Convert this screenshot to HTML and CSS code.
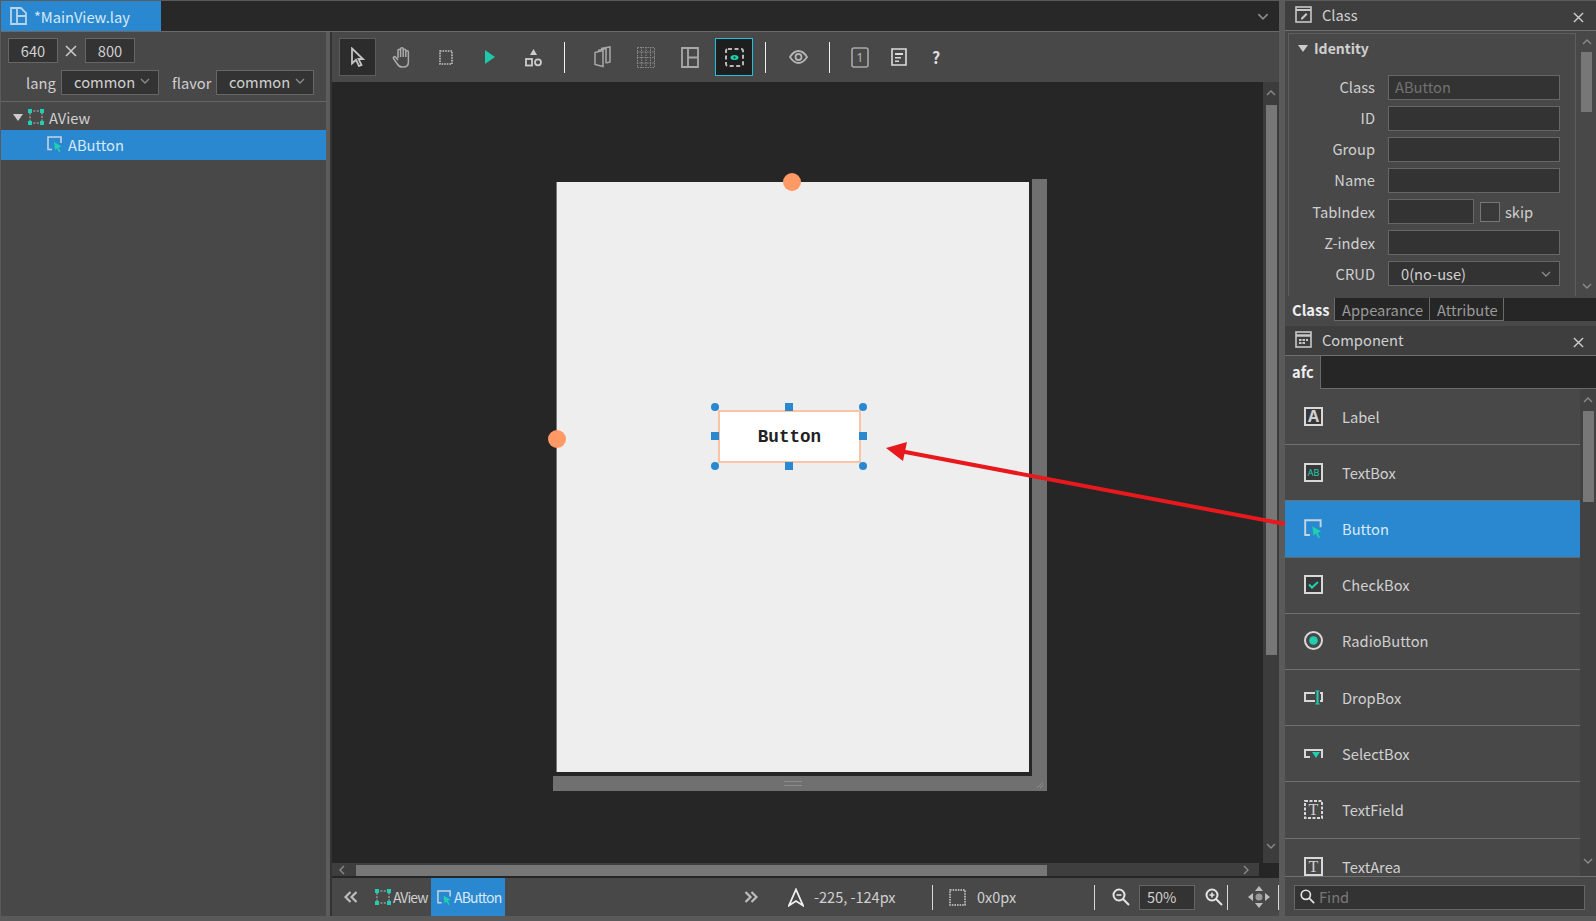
FILE: index.html
```html
<!DOCTYPE html>
<html lang="en">
<head>
    <meta charset="utf-8">
    <title>MainView.lay</title>
    <link rel="stylesheet" href="styles.css">
</head>
<body>
    <svg class="defs" width="0" height="0">
        <symbol id="i-view" viewBox="0 0 16 16">
            <rect x="2" y="2" width="12" height="12" fill="none" stroke="#bbb" stroke-dasharray="2 1.4"/>
            <path d="M0 0h4v4H0zM12 0h4v4h-4zM0 12h4v4H0zM12 12h4v4h-4z" fill="#1fd0b0"/>
        </symbol>
        <symbol id="i-button" viewBox="0 0 16 16">
            <path d="M5 13.500H1V1h13v6" fill="none" stroke="#c4d4e2" stroke-width="1.600"/>
            <path d="M7 6l7.500 4.500-3 1 2 4-1.500.5-2-3.800-2 1.800z" fill="#1fd0b0"/>
        </symbol>
        <symbol id="i-chev" viewBox="0 0 10 6">
            <path d="M1 1l4 4 4-4" fill="none" stroke="#8a8a8a" stroke-width="1.400"/>
        </symbol>
        <symbol id="i-close" viewBox="0 0 12 12">
            <path d="M1 1l10 10M11 1L1 11" stroke="#ccc" stroke-width="1.500"/>
        </symbol>
        <symbol id="i-glass" viewBox="0 0 18 18">
            <circle cx="7" cy="7" r="5.500" fill="none" stroke="#e4e4e4" stroke-width="2"/>
            <path d="M11 11l6 6" stroke="#e4e4e4" stroke-width="2"/>
        </symbol>
    </svg>

    <div class="app">
        <div class="main">
            <div class="tabbar">
                <div class="file-tab">
                    <svg width="17" height="18" viewBox="0 0 17 18"><path d="M1 1h10l5 5v11H1zM7 1v16M7 9h9" fill="none" stroke="#b8d4ea" stroke-width="1.800"/></svg>
                    <span>*MainView.lay</span>
                </div>
                <svg class="tab-more" width="12" height="7"><use href="#i-chev"/></svg>
            </div>

            <div class="work">
                <div class="left">
                    <div class="size-row">
                        <div class="field size-field">640</div>
                        <svg class="times" width="12" height="12"><use href="#i-close"/></svg>
                        <div class="field size-field">800</div>
                    </div>
                    <div class="lang-row">
                        <span class="lang-label">lang</span>
                        <div class="field select-field"><span>common</span><svg width="10" height="6"><use href="#i-chev"/></svg></div>
                        <span class="flavor-label">flavor</span>
                        <div class="field select-field"><span>common</span><svg width="10" height="6"><use href="#i-chev"/></svg></div>
                    </div>
                    <div class="tree">
                        <div class="tree-row">
                            <i class="tri"></i>
                            <svg width="16" height="16"><use href="#i-view"/></svg>
                            <span>AView</span>
                        </div>
                        <div class="tree-row child selected">
                            <svg width="16" height="16"><use href="#i-button"/></svg>
                            <span>AButton</span>
                        </div>
                    </div>
                </div>
                <div class="splitter"></div>

                <div class="center">
                    <div class="toolbar">
                        <div class="tool pressed">
                            <svg width="16" height="20" viewBox="0 0 16 20"><path d="M2 1.500l11 10.500h-4.500l3 6-2.500 1-3-6.200L2 16.500z" fill="none" stroke="#c4c4c4" stroke-width="1.800"/></svg>
                        </div>
                        <div class="tool">
                            <svg width="20" height="22" viewBox="0 0 20 22"><path d="M6 12V4.500a1.300 1.300 0 0 1 2.600 0V3a1.300 1.300 0 0 1 2.600 0v1.500a1.300 1.300 0 0 1 2.600 0v1.500a1.300 1.300 0 0 1 2.600 0v10c0 3-2 5-5 5H10c-2.500 0-3.500-1-5-3.500L1.500 12.500c-.8-1.500 1.200-2.500 2.200-1.300L6 14M8.600 4.500V11M11.200 4.500V11M13.800 6v5" fill="none" stroke="#aaa" stroke-width="1.500"/></svg>
                        </div>
                        <div class="tool">
                            <svg width="14" height="15" viewBox="0 0 14 15"><rect x="1" y="1" width="12" height="13" fill="none" stroke="#c4c4c4" stroke-width="1.600" stroke-dasharray="1.600 1"/></svg>
                        </div>
                        <div class="tool">
                            <svg width="10" height="14" viewBox="0 0 10 14"><path d="M0 0l10 7-10 7z" fill="#1fc8a8"/></svg>
                        </div>
                        <div class="tool">
                            <svg width="17" height="19" viewBox="0 0 17 19"><path d="M8.500 1l3.500 6H5z" fill="#ccc"/><rect x="1" y="11" width="6" height="6.500" fill="none" stroke="#ccc" stroke-width="1.800"/><circle cx="13" cy="14.300" r="3" fill="none" stroke="#ccc" stroke-width="1.800"/></svg>
                        </div>
                        <i class="tool-sep first"></i>
                        <div class="tool">
                            <svg width="17" height="22" viewBox="0 0 17 22"><path d="M1 6.500l8-2v16l-8-2z" fill="none" stroke="#a8a8a8" stroke-width="1.500"/><path d="M4 4.500l8-2v15M7 2.500l9-1.500v15l-3 .8" fill="none" stroke="#a8a8a8" stroke-width="1.500"/></svg>
                        </div>
                        <div class="tool">
                            <svg width="18" height="21" viewBox="0 0 18 21"><rect x=".5" y=".5" width="17" height="20" fill="none" stroke="#8a8a8a" stroke-dasharray="1.500 1"/><path d="M0 5h18M0 10.500h18M0 16h18M4.500 0v21M9 0v21M13.500 0v21" stroke="#8a8a8a" stroke-dasharray="1.500 1"/></svg>
                        </div>
                        <div class="tool">
                            <svg width="18" height="21" viewBox="0 0 18 21"><path d="M1 1h16v19H1zM7 1v19M7 10.500h10" fill="none" stroke="#a8a8a8" stroke-width="1.800"/></svg>
                        </div>
                        <div class="tool focus">
                            <svg width="19" height="19" viewBox="0 0 19 19"><rect x="1" y="1" width="17" height="17" rx="2" fill="none" stroke="#b8b8b8" stroke-width="2" stroke-dasharray="4 2.500"/><ellipse cx="9.500" cy="9.500" rx="4" ry="2.500" fill="#1fd0b0"/><circle cx="9.500" cy="9.500" r="1" fill="#222"/></svg>
                        </div>
                        <i class="tool-sep second"></i>
                        <div class="tool">
                            <svg width="19" height="14" viewBox="0 0 19 14"><path d="M1 7c2.500-4 5-6 8.500-6S15.500 3 18 7c-2.500 4-5 6-8.500 6S3.500 11 1 7z" fill="none" stroke="#b4b4b4" stroke-width="1.800"/><circle cx="9.500" cy="7" r="3" fill="none" stroke="#b4b4b4" stroke-width="1.800"/></svg>
                        </div>
                        <i class="tool-sep third"></i>
                        <div class="tool w40">
                            <svg width="18" height="21" viewBox="0 0 18 21"><rect x="1" y="1" width="16" height="19" rx="2" fill="none" stroke="#a8a8a8" stroke-width="1.600"/><text x="9" y="15" text-anchor="middle" class="glyph" font-size="12" fill="#b8b8b8">1</text></svg>
                        </div>
                        <div class="tool w38">
                            <svg width="16" height="18" viewBox="0 0 16 18"><path d="M1 1h14v16H1z" fill="none" stroke="#dcdcdc" stroke-width="1.600"/><path d="M4 5h8v2H4zM4 9h6v1.500H4zM4 12.500h4V14H4z" fill="#dcdcdc"/></svg>
                        </div>
                        <div class="tool w36 help">?</div>
                    </div>

                    <div class="canvas-wrap">
                        <div class="canvas">
                            <div class="right-grip"></div>
                            <div class="bottom-grip">
                                <i class="grip-lines"></i>
                                <svg class="grip-corner" width="8" height="8" viewBox="0 0 8 8"><path d="M1 7l6-6M4 7l3-3" stroke="#8c8c8c"/></svg>
                            </div>
                            <div class="paper"></div>
                            <div class="anchor anchor-top"></div>
                            <div class="anchor anchor-left"></div>
                            <div class="widget">Button</div>
                            <i class="hd round tl"></i><i class="hd tc"></i><i class="hd round tr"></i>
                            <i class="hd ml"></i><i class="hd mr"></i>
                            <i class="hd round bl"></i><i class="hd bc"></i><i class="hd round br"></i>
                        </div>
                        <div class="vscroll">
                            <svg width="10" height="6" class="flip"><use href="#i-chev"/></svg>
                            <div class="vthumb"></div>
                            <svg width="10" height="6"><use href="#i-chev"/></svg>
                        </div>
                    </div>

                    <div class="hscroll">
                        <div class="htrack">
                            <svg class="rot-l" width="10" height="6"><use href="#i-chev"/></svg>
                            <div class="hthumb"></div>
                            <svg class="rot-r" width="10" height="6"><use href="#i-chev"/></svg>
                        </div>
                    </div>

                    <div class="statusbar">
                        <svg class="dbl" width="14" height="12" viewBox="0 0 14 12"><path d="M6.500 1L1.500 6l5 5M12.500 1l-5 5 5 5" fill="none" stroke="#bdbdbd" stroke-width="2.200"/></svg>
                        <div class="crumb">
                            <svg width="16" height="16"><use href="#i-view"/></svg>
                            <span>AView</span>
                        </div>
                        <div class="crumb active">
                            <svg width="15" height="15"><use href="#i-button"/></svg>
                            <span>AButton</span>
                        </div>
                        <svg class="dbl-right" width="14" height="12" viewBox="0 0 14 12"><path d="M1.500 1l5 5-5 5M7.500 1l5 5-5 5" fill="none" stroke="#bdbdbd" stroke-width="2.200"/></svg>
                        <svg class="pos-icon" width="16" height="19" viewBox="0 0 16 19"><path d="M8 1.500L15 17.500 8 13 1 17.500z" fill="none" stroke="#f0f0f0" stroke-width="1.800"/></svg>
                        <span class="pos-text">-225, -124px</span>
                        <i class="bar-sep s1"></i>
                        <svg class="size-icon" width="17" height="17" viewBox="0 0 17 17"><rect x="1" y="1" width="15" height="15" fill="none" stroke="#d0d0d0" stroke-width="1.500" stroke-dasharray="1.600 1"/></svg>
                        <span class="size-text">0x0px</span>
                        <i class="bar-sep s2"></i>
                        <svg class="zoom-out" width="18" height="18" viewBox="0 0 18 18"><use href="#i-glass"/><path d="M4.500 7h5" stroke="#e4e4e4" stroke-width="1.600"/></svg>
                        <div class="field zoom-field">50%</div>
                        <svg class="zoom-in" width="18" height="18" viewBox="0 0 18 18"><use href="#i-glass"/><path d="M4.500 7h5M7 4.500v5" stroke="#e4e4e4" stroke-width="1.600"/></svg>
                        <i class="bar-sep s3"></i>
                        <svg class="move-icon" width="24" height="24" viewBox="0 0 24 24"><path d="M12 1l4 5h-8zM12 23l-4-5h8zM1 12l5-4v8zM23 12l-5 4V8z" fill="#bdbdbd"/><circle cx="12" cy="12" r="3.500" fill="#9a9a9a"/></svg>
                        <i class="bar-sep s4"></i>
                    </div>
                </div>
            </div>
        </div>

        <div class="right">
            <div class="panel-head">
                <svg width="17" height="17" viewBox="0 0 17 17"><rect x="1" y="1" width="15" height="15" fill="none" stroke="#c8c8c8" stroke-width="1.600"/><path d="M1 4h15" stroke="#c8c8c8" stroke-width="2"/><path d="M6 12l5-5 1.500 1.500-5 5H6z" fill="#c8c8c8"/></svg>
                <span>Class</span>
                <svg class="close" width="11" height="11"><use href="#i-close"/></svg>
            </div>
            <div class="class-box">
                <div class="class-inner">
                    <div class="group-title"><i class="tri"></i><span>Identity</span></div>
                    <div class="form">
                        <label>Class</label><div class="field wide muted">AButton</div>
                        <label>ID</label><div class="field wide"></div>
                        <label>Group</label><div class="field wide"></div>
                        <label>Name</label><div class="field wide"></div>
                        <label>TabIndex</label>
                        <div class="tab-line">
                            <div class="field tabindex"></div>
                            <i class="check"></i>
                            <span>skip</span>
                        </div>
                        <label>Z-index</label><div class="field wide"></div>
                        <label>CRUD</label>
                        <div class="field wide crud"><span>0(no-use)</span><svg width="10" height="6"><use href="#i-chev"/></svg></div>
                    </div>
                </div>
                <div class="rscroll">
                    <svg width="10" height="6" class="flip"><use href="#i-chev"/></svg>
                    <div class="rthumb"></div>
                    <svg width="10" height="6"><use href="#i-chev"/></svg>
                </div>
            </div>
            <div class="tabs">
                <div class="tab active">Class</div>
                <div class="tab appearance">Appearance</div>
                <div class="tab attribute">Attribute</div>
            </div>

            <div class="panel-head second">
                <svg width="17" height="17" viewBox="0 0 17 17"><rect x="1" y="1" width="15" height="15" fill="none" stroke="#c8c8c8" stroke-width="1.600"/><path d="M1 4.500h15" stroke="#c8c8c8" stroke-width="2.500"/><path d="M4 8h2.500v2H4zM7.500 8H10v2H7.500zM11 8h2v2h-2zM4 11h2.500v2H4zM7.500 11H10v2H7.500z" fill="#c8c8c8"/></svg>
                <span>Component</span>
                <svg class="close" width="11" height="11"><use href="#i-close"/></svg>
            </div>
            <div class="lib-tabs">
                <div class="lib-tab">afc</div>
                <div class="lib-rest"></div>
            </div>
            <div class="lib">
                <div class="lib-list">
                    <div class="item">
                        <svg width="19" height="19" viewBox="0 0 19 19"><rect x="1" y="1" width="17" height="17" fill="#383838" stroke="#d8d8d8" stroke-width="2"/><text x="9.500" y="15" text-anchor="middle" class="glyph bold" font-size="16" fill="#d0d0d0">A</text></svg>
                        <span>Label</span>
                    </div>
                    <div class="item">
                        <svg width="19" height="19" viewBox="0 0 19 19"><rect x="1" y="1" width="17" height="17" fill="#383838" stroke="#d8d8d8" stroke-width="2"/><text x="9.500" y="13" text-anchor="middle" class="glyph" font-size="9" fill="#1fd0b0">AB</text></svg>
                        <span>TextBox</span>
                    </div>
                    <div class="item selected">
                        <svg width="19" height="19"><use href="#i-button"/></svg>
                        <span>Button</span>
                    </div>
                    <div class="item">
                        <svg width="19" height="19" viewBox="0 0 19 19"><rect x="1" y="1" width="17" height="17" fill="#383838" stroke="#d8d8d8" stroke-width="2"/><path d="M5 9.500l3 3 6-5.500" fill="none" stroke="#1fd0b0" stroke-width="2"/></svg>
                        <span>CheckBox</span>
                    </div>
                    <div class="item">
                        <svg width="19" height="19" viewBox="0 0 19 19"><circle cx="9.500" cy="9.500" r="8.500" fill="none" stroke="#d8d8d8" stroke-width="2"/><circle cx="9.500" cy="9.500" r="4.300" fill="#1fd0b0"/></svg>
                        <span>RadioButton</span>
                    </div>
                    <div class="item">
                        <svg width="19" height="15" viewBox="0 0 19 15"><path d="M11 3H1v8h10M16 3h2v8h-2" fill="none" stroke="#d8d8d8" stroke-width="2"/><path d="M13.500 1v13" stroke="#1fd0b0" stroke-width="2"/><path d="M11.500 1h4M11.500 14h4" stroke="#1fd0b0"/></svg>
                        <span>DropBox</span>
                    </div>
                    <div class="item">
                        <svg width="19" height="11" viewBox="0 0 19 11"><path d="M6 9H1V2h17v7h-1" fill="none" stroke="#d8d8d8" stroke-width="2"/><path d="M8 4h8l-4 6z" fill="#1fd0b0"/></svg>
                        <span>SelectBox</span>
                    </div>
                    <div class="item">
                        <svg width="19" height="19" viewBox="0 0 19 19"><rect x="1" y="1" width="17" height="17" fill="none" stroke="#d8d8d8" stroke-width="2" stroke-dasharray="3 1.500"/><text x="9.500" y="15" text-anchor="middle" class="glyph serif" font-size="16" fill="#d0d0d0">T</text></svg>
                        <span>TextField</span>
                    </div>
                    <div class="item last">
                        <svg width="19" height="19" viewBox="0 0 19 19"><rect x="1" y="1" width="17" height="17" fill="none" stroke="#d8d8d8" stroke-width="2"/><text x="9.500" y="15" text-anchor="middle" class="glyph serif" font-size="16" fill="#d0d0d0">T</text></svg>
                        <span>TextArea</span>
                    </div>
                </div>
                <div class="lib-scroll">
                    <svg width="10" height="6" class="flip"><use href="#i-chev"/></svg>
                    <div class="lib-thumb"></div>
                    <svg width="10" height="6"><use href="#i-chev"/></svg>
                </div>
            </div>
            <div class="find-row">
                <div class="field find">
                    <svg width="15" height="15" viewBox="0 0 18 18"><use href="#i-glass"/></svg>
                    <span>Find</span>
                </div>
            </div>
        </div>
    </div>

    <svg class="arrow" width="1596" height="921" viewBox="0 0 1596 921">
        <path d="M1285 524L900 451" stroke="#e8191c" stroke-width="4" fill="none"/>
        <path d="M886 448L907 442 903 461z" fill="#e8191c"/>
    </svg>
</body>
</html>
```
FILE: styles.css
```css
* {
    box-sizing: border-box;
}
body {
    margin: 0;
    height: 921px;
    overflow: hidden;
    position: relative;
    background: #5a5a5a;
    color: #d0d0d0;
    font-family: "Noto Sans CJK KR", "Noto Sans", sans-serif;
    font-size: 14.7px;
}
i {
    display: block;
}
svg {
    flex: none;
}
.defs {
    position: absolute;
}
.glyph {
    font-family: "Noto Sans", sans-serif;
}
.glyph.bold {
    font-weight: bold;
}
.glyph.serif {
    font-family: "Liberation Serif", serif;
}
.arrow {
    position: absolute;
    left: 0;
    top: 0;
    pointer-events: none;
}

.app {
    display: flex;
    height: 921px;
    padding-top: 1px;
}
.main {
    width: 1278px;
    margin-left: 1px;
    display: flex;
    flex-direction: column;
}
.tabbar {
    height: 31px;
    flex: none;
    background: #282828;
    border-bottom: 1px solid #6a6a6a;
    display: flex;
    align-items: stretch;
    position: relative;
}
.file-tab {
    width: 160px;
    background: #2a88d0;
    color: #d8e8f4;
    display: flex;
    align-items: center;
    padding-left: 9px;
    gap: 7px;
}
.tab-more {
    margin: 12px 0 0 1096px;
}

.work {
    flex: 1;
    display: flex;
    min-height: 0;
}
.left {
    width: 325px;
    height: 884px;
    background: #484848;
    flex: none;
}
.splitter {
    width: 6px;
    height: 884px;
    flex: none;
    background: #5c5c5c;
    border-right: 2px solid #333;
}
.field {
    background: #333;
    border: 1px solid #666;
    height: 25px;
    display: flex;
    align-items: center;
}
.size-row {
    display: flex;
    align-items: center;
    padding: 6px 0 0 7px;
}
.size-field {
    width: 50px;
    justify-content: center;
}
.times {
    margin: 0 8px 0 7px;
    width: 12px;
}
.lang-row {
    display: flex;
    align-items: center;
    padding-top: 7px;
    height: 39px;
    border-bottom: 1px solid #666;
    padding-bottom: 7px;
}
.lang-label {
    margin-left: 25px;
    width: 35px;
}
.flavor-label {
    margin-left: 13px;
    width: 44px;
}
.select-field {
    width: 98px;
    justify-content: space-between;
    padding: 0 8px 2px 12px;
}
.tree-row {
    height: 28px;
    display: flex;
    align-items: center;
    padding: 2px 0 0 12px;
    gap: 5px;
}
.tree-row.child {
    height: 30px;
    padding: 0 0 2px 46px;
    gap: 5px;
}
.selected {
    background: #2a88d0;
    color: #d8e8f4;
}
.tri {
    width: 0;
    height: 0;
    border-left: 5px solid transparent;
    border-right: 5px solid transparent;
    border-top: 7px solid #ccc;
}

.center {
    flex: 1;
    min-width: 0;
    height: 884px;
    display: flex;
    flex-direction: column;
    background: #262626;
}
.toolbar {
    height: 50px;
    flex: none;
    background: #484848;
    display: flex;
    align-items: center;
    padding-left: 3.5px;
}
.tool {
    width: 44px;
    height: 38px;
    display: flex;
    align-items: center;
    justify-content: center;
    flex: none;
}
.tool.pressed {
    width: 37px;
    margin: 0 3.5px;
    background: #2c2c2c;
    border: 1px solid #5c5c5c;
}
.tool.focus {
    width: 38px;
    margin: 0 3px;
    background: #1e1e1e;
    border: 1px solid #1fc0e0;
}
.tool.w40 {
    width: 40px;
}
.tool.w38 {
    width: 38px;
}
.tool.w36 {
    width: 36px;
}
.help {
    color: #ddd;
    font-size: 16px;
    font-weight: bold;
}
.tool-sep {
    width: 1px;
    height: 31px;
    background: #f0f0f0;
    flex: none;
}
.tool-sep.first {
    margin: 0 15px 0 8.5px;
}
.tool-sep.second {
    margin: 0 10px 0 9px;
}
.tool-sep.third {
    margin: 0 10px 0 9px;
}

.canvas-wrap {
    flex: 1;
    display: flex;
    min-height: 0;
}
.canvas {
    flex: 1;
    position: relative;
}
.paper {
    position: absolute;
    left: 224px;
    top: 100px;
    width: 473px;
    height: 590px;
    background: #eee;
    border-left: 1px solid #777;
}
.right-grip {
    position: absolute;
    left: 700px;
    top: 97px;
    width: 15px;
    height: 612px;
    background: #707070;
}
.bottom-grip {
    position: absolute;
    left: 221px;
    top: 694px;
    width: 494px;
    height: 15px;
    background: #707070;
}
.grip-lines {
    position: absolute;
    left: 231px;
    top: 5px;
    width: 18px;
    height: 5px;
    border-top: 1px solid #8c8c8c;
    border-bottom: 1px solid #8c8c8c;
}
.grip-corner {
    position: absolute;
    right: 3px;
    top: 5px;
}
.anchor {
    position: absolute;
    width: 18px;
    height: 18px;
    border-radius: 50%;
    background: #ff9966;
}
.anchor-top {
    left: 451px;
    top: 91px;
}
.anchor-left {
    left: 216px;
    top: 348px;
}
.widget {
    position: absolute;
    left: 386px;
    top: 328px;
    width: 143px;
    height: 53px;
    background: #fff;
    border: 2px solid #fbc5a5;
    color: #222;
    font-family: "Liberation Mono", monospace;
    font-weight: bold;
    font-size: 17.6px;
    display: flex;
    align-items: center;
    justify-content: center;
}
.hd {
    position: absolute;
    width: 8px;
    height: 8px;
    background: #2a88d0;
}
.hd.round {
    border-radius: 50%;
}
.tl { left: 379px; top: 321px; }
.tc { left: 453px; top: 321px; }
.tr { left: 527px; top: 321px; }
.ml { left: 379px; top: 350px; }
.mr { left: 527px; top: 350px; }
.bl { left: 379px; top: 380px; }
.bc { left: 453px; top: 380px; }
.br { left: 527px; top: 380px; }

.vscroll,
.rscroll,
.lib-scroll {
    flex: none;
    display: flex;
    flex-direction: column;
    align-items: center;
}
.flip {
    transform: rotate(180deg);
}
.vscroll {
    width: 16px;
    background: #3c3c3c;
    padding-top: 8px;
}
.vthumb {
    width: 11px;
    height: 550px;
    margin: 9px 0 188px;
    background: #777;
}
.hscroll {
    height: 15px;
    flex: none;
    padding-bottom: 2px;
    background: #262626;
    padding-right: 20px;
}
.htrack {
    height: 13px;
    background: #3e3e3e;
    display: flex;
    align-items: center;
    padding: 0 5px;
}
.hthumb {
    width: 691px;
    height: 11px;
    margin: 0 194px 0 9px;
    align-self: flex-end;
    background: #777;
}
.rot-l {
    transform: rotate(90deg);
}
.rot-r {
    transform: rotate(-90deg);
}
.statusbar {
    height: 38px;
    flex: none;
    background: #484848;
    display: flex;
    align-items: center;
    font-size: 14.5px;
}
.dbl {
    margin: 0 17px 0 12px;
}
.crumb {
    display: flex;
    align-items: center;
    gap: 2px;
    height: 38px;
    width: 51px;
    font-size: 14px;
    letter-spacing: -0.95px;
}
.crumb.active {
    background: #2a88d0;
    color: #d8e8f4;
    width: 74px;
    padding-left: 6px;
    margin-left: 5px;
    letter-spacing: -0.85px;
}
.dbl-right {
    margin-left: 239px;
}
.pos-icon {
    margin-left: 30px;
}
.pos-text {
    margin-left: 10px;
    width: 118px;
    padding-bottom: 2px;
}
.bar-sep {
    width: 1px;
    height: 25px;
    background: #d8d8d8;
    flex: none;
}
.size-icon {
    margin-left: 16px;
}
.size-text {
    margin-left: 11px;
    width: 117px;
    padding-bottom: 2px;
}
.zoom-out {
    margin-left: 17px;
}
.zoom-field {
    width: 56px;
    margin-left: 9px;
    padding: 0 0 2px 7px;
}
.zoom-in {
    margin-left: 10px;
}
.s3 {
    margin-left: 4px;
}
.move-icon {
    margin-left: 19px;
}
.s4 {
    margin-left: 7px;
}

.right {
    width: 311px;
    margin-left: 6px;
    display: flex;
    flex-direction: column;
    height: 915px;
    background: #484848;
}
.panel-head {
    height: 30px;
    flex: none;
    display: flex;
    align-items: center;
    padding: 0 0 2px 10px;
    gap: 10px;
    border-bottom: 1px solid #707070;
    background: #3e3e3e;
    position: relative;
}
.panel-head .close {
    position: absolute;
    right: 12px;
    top: 11px;
}
.panel-head.second {
    margin-top: 5px;
}
.class-box {
    height: 267px;
    flex: none;
    display: flex;
    padding: 2px 0 2px 3px;
}
.class-inner {
    width: 289px;
    border: 1px solid #5e5e5e;
    border-bottom: 0;
}
.group-title {
    display: flex;
    align-items: center;
    gap: 6px;
    padding: 0 0 0 9px;
    height: 28px;
    font-weight: bold;
    font-size: 14px;
}
.form {
    display: grid;
    grid-template-columns: 86px 172px;
    column-gap: 13px;
    row-gap: 6px;
    padding-top: 13px;
    align-items: center;
}
.form label {
    text-align: right;
}
.form label:nth-of-type(-n+4) {
    padding-bottom: 2px;
}
.muted {
    color: #727272;
    padding: 0 0 2px 6px;
}
.tab-line {
    display: flex;
    align-items: center;
    height: 25px;
    gap: 6px;
}
.tab-line span {
    margin-left: -1px;
}
.field.tabindex {
    width: 86px;
}
.check {
    width: 20px;
    height: 20px;
    background: #3a3a3a;
    border: 1px solid #777;
}
.crud {
    justify-content: space-between;
    padding: 0 8px 0 12px;
}
.rscroll {
    width: 19px;
    padding-top: 6px;
    margin-left: 1px;
}
.rthumb {
    width: 11px;
    height: 60px;
    margin: 7px 0 171px;
    background: #777;
}
.tabs {
    height: 23px;
    flex: none;
    display: flex;
    background: #262626;
}
.tab {
    padding-left: 7px;
    border-right: 1px solid #6a6a6a;
    border-bottom: 1px solid #6a6a6a;
    color: #9a9a9a;
    line-height: 23px;
}
.tab.active {
    width: 50px;
    background: #484848;
    color: #eee;
    font-weight: bold;
    border-bottom: 0;
}
.tab.appearance {
    width: 95px;
}
.tab.attribute {
    width: 74px;
}
.lib-tabs {
    height: 33px;
    flex: none;
    display: flex;
    background: #484848;
}
.lib-tab {
    width: 35px;
    color: #eee;
    font-weight: bold;
    padding-left: 7px;
    line-height: 31px;
}
.lib-rest {
    flex: 1;
    background: #262626;
    border-left: 1px solid #6a6a6a;
    border-bottom: 1px solid #6a6a6a;
}
.lib {
    height: 488px;
    flex: none;
    display: flex;
    border-bottom: 1px solid #707070;
}
.lib-list {
    width: 295px;
}
.item {
    height: 56.2px;
    display: flex;
    align-items: center;
    padding: 0 0 1px 19px;
    gap: 19px;
    border-bottom: 1px solid #707070;
}
.item.selected {
    border-bottom-color: #666;
}
.item.last {
    height: 38px;
    padding: 17px 0 0 19px;
    border-bottom: 0;
}
.lib-scroll {
    width: 16px;
    background: #424242;
    padding-top: 8px;
}
.lib-thumb {
    width: 11px;
    height: 91px;
    margin: 8px 0 356px;
    background: #777;
}
.find-row {
    padding: 8px 11px 0 9px;
}
.find {
    gap: 4px;
    padding: 0 0 2px 5px;
    color: #787878;
}
```
